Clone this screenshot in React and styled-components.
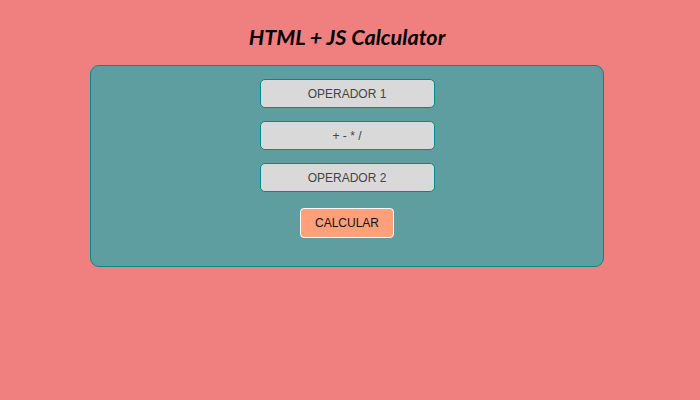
import React from "react";
import styled, { createGlobalStyle } from "styled-components";

const GlobalStyle = createGlobalStyle`
  body {
    margin: 0;
    background: #f08080;
    font-family: "Liberation Sans", Arial, sans-serif;
  }
`;

const Page = styled.div`
  width: 694px;
  padding-top: 22px;
`;

const Heading = styled.h1`
  margin: 0 0 13px;
  text-align: center;
  font-family: "Lato", sans-serif;
  font-style: italic;
  font-weight: 700;
  font-size: 21.6px;
  line-height: 30px;
  color: #000;
`;

const Panel = styled.div`
  box-sizing: border-box;
  width: 514px;
  height: 202px;
  margin: 0 auto;
  padding-top: 13px;
  background: #5f9ea0;
  border: 1px solid #008b8b;
  border-radius: 9px;
  display: flex;
  flex-direction: column;
  align-items: center;
  gap: 13px;
`;

const Field = styled.input`
  box-sizing: border-box;
  width: 175px;
  height: 29px;
  margin: 0;
  padding: 0;
  background: #d9d9d9;
  border: 1px solid #008b8b;
  border-radius: 5px;
  text-align: center;
  font-family: "Liberation Sans", Arial, sans-serif;
  font-size: 12px;
  color: #333;
  outline: none;
  &::placeholder {
    color: #444;
  }
`;

const Button = styled.button`
  box-sizing: border-box;
  width: 94px;
  height: 30px;
  margin-top: 3px;
  background: #ffa07a;
  border: 1px solid #fff;
  border-radius: 4px;
  font-family: "Liberation Sans", Arial, sans-serif;
  font-size: 12px;
  color: #111;
  cursor: pointer;
`;

export default function App() {
  return (
    <Page>
      <GlobalStyle />
      <Heading>HTML + JS Calculator</Heading>
      <Panel>
        <Field placeholder="OPERADOR 1" />
        <Field placeholder="+ - * /" />
        <Field placeholder="OPERADOR 2" />
        <Button>CALCULAR</Button>
      </Panel>
    </Page>
  );
}
